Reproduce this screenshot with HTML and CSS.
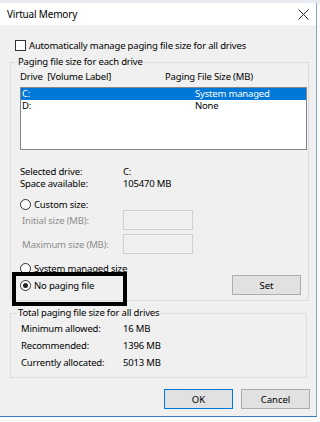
FILE: index.html
```html
<!DOCTYPE html>
<html lang="en">
<head>
    <meta charset="UTF-8">
    <title>Virtual Memory</title>
    <link rel="stylesheet" href="styles.css">
</head>
<body>
<div class="behind"></div>

<div class="window">
    <div class="titlebar">
        <span class="title">Virtual Memory</span>
        <svg class="close" width="11" height="11" viewBox="0 0 11 11">
            <path d="M0.5 0.5 L10.5 10.5 M10.5 0.5 L0.5 10.5" stroke="#222" stroke-width="1" fill="none"/>
        </svg>
    </div>

    <div class="content">
        <div class="auto-row">
            <span class="checkbox"></span>
            <span>Automatically manage paging file size for all drives</span>
        </div>

        <!-- Paging file size for each drive -->
        <div class="group group-drives">
            <div class="legend">Paging file size for each drive</div>
            <div class="list-head">
                <span class="col-drive">Drive&nbsp; [Volume Label]</span>
                <span>Paging File Size (MB)</span>
            </div>
            <div class="listbox">
                <div class="list-row selected">
                    <span class="col-drive">C:</span>
                    <span class="col-size">System managed</span>
                </div>
                <div class="list-row">
                    <span class="col-drive">D:</span>
                    <span class="col-size">None</span>
                </div>
            </div>

            <div class="info first">
                <span class="info-label">Selected drive:</span>
                <span>C:</span>
            </div>
            <div class="info">
                <span class="info-label">Space available:</span>
                <span>105470 MB</span>
            </div>

            <div class="radio-row custom">
                <span class="radio"></span>
                <span>Custom size:</span>
            </div>
            <div class="size-row">
                <span class="info-label disabled">Initial size (MB):</span>
                <span class="textbox"></span>
            </div>
            <div class="size-row max">
                <span class="info-label disabled">Maximum size (MB):</span>
                <span class="textbox"></span>
            </div>
            <div class="radio-row system">
                <span class="radio"></span>
                <span>System managed size</span>
            </div>
            <div class="radio-row nopaging">
                <span class="radio checked"></span>
                <span>No paging file</span>
                <button class="btn set-btn">Set</button>
                <div class="highlight"></div>
            </div>
        </div>

        <!-- Total paging file size for all drives -->
        <div class="group group-total">
            <div class="legend">Total paging file size for all drives</div>
            <div class="total-row">
                <span class="total-label">Minimum allowed:</span>
                <span>16 MB</span>
            </div>
            <div class="total-row">
                <span class="total-label">Recommended:</span>
                <span>1396 MB</span>
            </div>
            <div class="total-row">
                <span class="total-label">Currently allocated:</span>
                <span>5013 MB</span>
            </div>
        </div>

        <div class="buttons">
            <button class="btn default">OK</button>
            <button class="btn">Cancel</button>
        </div>
    </div>
</div>
</body>
</html>
```

FILE: styles.css
```css
body {
    margin: 0;
    background: #fafafa;
    font-family: "Noto Sans", "DejaVu Sans", sans-serif;
    font-size: 9.5px;
    letter-spacing: -0.18px;
    color: #000;
}
.behind {
    height: 3px;
    background: #e8ecf0;
}
.window {
    width: 316px;
    border-right: 1px solid #8aa6c4;
    border-bottom: 1px solid #3b7cc2;
}
.titlebar {
    height: 22px;
    background: #fff;
    display: flex;
    align-items: center;
    justify-content: space-between;
    padding: 0 5px 0 7px;
}
.title {
    font-size: 10px;
}
.close {
    margin-right: 2px;
}
.content {
    background: #f0f0f0;
    padding: 15px 0 7px 10px;
}
.auto-row {
    display: flex;
    align-items: center;
    height: 11px;
    padding-left: 5px;
}
.checkbox {
    width: 9px;
    height: 9px;
    border: 1px solid #333;
    background: #fff;
    margin-right: 3px;
}
.group {
    border: 1px solid #dcdcdc;
    padding-left: 9px;
}
.legend {
    width: fit-content;
    margin: -8px 0 0 -3px;
    padding: 0 1px;
    height: 14px;
    line-height: 14px;
    background: #f0f0f0;
}
.group-drives {
    width: 288px;
    margin-top: 11px;
    padding-bottom: 5px;
}
.list-head {
    display: flex;
    height: 14px;
    line-height: 14px;
    margin-top: 1px;
}
.col-drive {
    width: 145px;
}
.listbox {
    margin-top: 3px;
    width: 285px;
    height: 61px;
    border: 1px solid #828790;
    background: #fff;
}
.list-row {
    display: flex;
    height: 12px;
    line-height: 12px;
}
.list-row .col-drive {
    width: 173px;
    padding-left: 1px;
}
.list-row.selected {
    background: #0078d7;
    color: #fff;
}
.info {
    display: flex;
    height: 12px;
    line-height: 12px;
}
.info.first {
    margin-top: 16px;
}
.info-label {
    width: 103px;
}
.disabled {
    color: #8d8d8d;
    padding-left: 2px;
    width: 101px;
}
.radio-row {
    display: flex;
    align-items: center;
    height: 12px;
    position: relative;
}
.radio {
    width: 9px;
    height: 9px;
    border: 1px solid #333;
    border-radius: 50%;
    background: #fff;
    margin-right: 3px;
    position: relative;
}
.radio.checked::after {
    content: "";
    position: absolute;
    left: 2px;
    top: 2px;
    width: 5px;
    height: 5px;
    border-radius: 50%;
    background: #222;
}
.custom {
    margin-top: 8px;
}
.size-row {
    display: flex;
    align-items: center;
    height: 20px;
}
.size-row.max {
    margin-top: 4px;
}
.textbox {
    width: 68px;
    height: 18px;
    border: 1px solid #cfcfcf;
    background: #f0f0f0;
}
.system {
    margin-top: 8px;
}
.nopaging {
    height: 20px;
    margin-top: 1px;
}
.btn {
    font-family: inherit;
    font-size: 9.5px;
    width: 69px;
    height: 20px;
    padding: 0;
    background: #e1e1e1;
    border: 1px solid #adadad;
    color: #000;
}
.set-btn {
    margin-left: auto;
    margin-right: 7px;
}
.btn.default {
    border-color: #0078d7;
}
.highlight {
    position: absolute;
    left: -8px;
    top: -3px;
    width: 107px;
    height: 26px;
    border: 4px solid #000;
}
.group-total {
    width: 285px;
    margin-top: 12px;
    padding-left: 10px;
    padding-bottom: 6px;
}
.group-total .legend {
    margin-left: -4px;
}
.total-row {
    display: flex;
    height: 17px;
    line-height: 17px;
}
.total-row:first-of-type {
    margin-top: 2px;
}
.total-label {
    width: 102px;
}
.buttons {
    display: flex;
    justify-content: flex-end;
    gap: 8px;
    margin-top: 11px;
    padding-right: 6px;
}
```
